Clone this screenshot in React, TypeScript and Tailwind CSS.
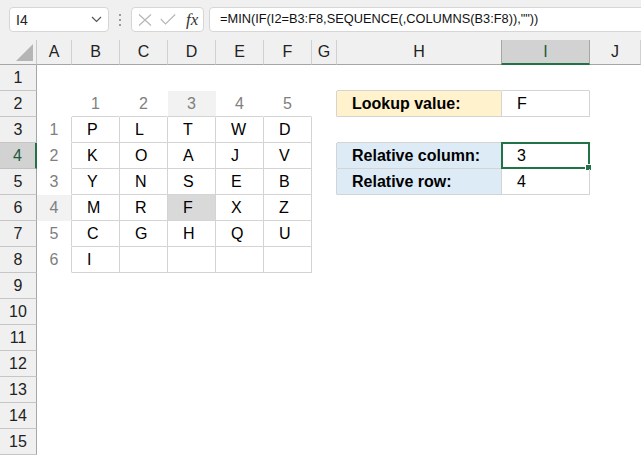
import React from "react";

const COLS = ["A", "B", "C", "D", "E", "F", "G", "H", "I", "J"];

const letters: Record<number, string[]> = {
  3: ["P", "L", "T", "W", "D"],
  4: ["K", "O", "A", "J", "V"],
  5: ["Y", "N", "S", "E", "B"],
  6: ["M", "R", "F", "X", "Z"],
  7: ["C", "G", "H", "Q", "U"],
  8: ["I", "", "", "", ""],
};

function rightColored(r: number, c: number) {
  if (r >= 3 && r <= 8 && c >= 0 && c <= 5) return true;
  if (r === 2 && c >= 6 && c <= 8) return true;
  if (r >= 4 && r <= 5 && c >= 6 && c <= 8) return true;
  return false;
}
function bottomColored(r: number, c: number) {
  if (r >= 2 && r <= 8 && c >= 1 && c <= 5) return true;
  if (r >= 1 && r <= 2 && (c === 7 || c === 8)) return true;
  if (r >= 3 && r <= 5 && (c === 7 || c === 8)) return true;
  return false;
}

function Cell({ r, c }: { r: number; c: number }) {
  const rc = rightColored(r, c);
  const bc = bottomColored(r, c);
  let bg = "";
  if ((r === 2 && c === 3) || (r === 6 && c === 0)) bg = "bg-[#f2f2f2]";
  if (r === 6 && c === 3) bg = "bg-[#d9d9d9]";
  if (r === 2 && c === 7) bg = "bg-[#fff2cc]";
  if ((r === 4 || r === 5) && c === 7) bg = "bg-[#ddebf7]";

  let content: React.ReactNode = null;
  let align = "justify-start";
  if (r === 2 && c >= 1 && c <= 5) {
    content = <span className="text-[#808080]">{c}</span>;
    align = "justify-center";
  } else if (r >= 3 && r <= 8 && c === 0) {
    content = <span className="text-[#808080]">{r - 2}</span>;
    align = "justify-center";
  } else if (r >= 3 && r <= 8 && c >= 1 && c <= 5) {
    content = <span className="pl-[15px]">{letters[r][c - 1]}</span>;
  } else if (c === 7 && r === 2) {
    content = <span className="pl-[15px] font-bold">Lookup value:</span>;
  } else if (c === 7 && r === 4) {
    content = <span className="pl-[15px] font-bold">Relative column:</span>;
  } else if (c === 7 && r === 5) {
    content = <span className="pl-[15px] font-bold">Relative row:</span>;
  } else if (c === 8 && r === 2) {
    content = <span className="pl-[15px]">F</span>;
  } else if (c === 8 && r === 4) {
    content = <span className="pl-[15px]">3</span>;
  } else if (c === 8 && r === 5) {
    content = <span className="pl-[15px]">4</span>;
  }

  return (
    <div
      className={`relative flex items-center ${align} border-r border-b ${
        rc ? "border-r-[#d4d4d4]" : "border-r-transparent"
      } ${bc ? "border-b-[#d4d4d4]" : "border-b-transparent"} ${bg} text-black`}
    >
      {content}
      {r === 4 && c === 8 && (
        <div className="absolute -top-[1px] -left-[1px] -right-[1px] -bottom-[1px] border-2 border-[#217346]">
          <div className="absolute -right-[4px] -bottom-[4px] w-[7px] h-[7px] bg-[#217346] border border-white" />
        </div>
      )}
    </div>
  );
}

export default function App() {
  const rows = Array.from({ length: 15 }, (_, i) => i + 1);
  return (
    <div className="w-[641px] h-[456px] overflow-hidden bg-white font-['Liberation_Sans',Arial,sans-serif] text-[16px] leading-none">
      {/* Formula bar */}
      <div className="h-[40px] bg-[#f0f0f0] flex items-start pt-[7px] pl-[9px]">
        <div className="w-[100px] h-[25px] shrink-0 bg-white border border-[#d6d6d6] rounded-[4px] flex items-center pl-[6px] pr-[4px]">
          <span className="text-[14px] text-[#222] flex-1">I4</span>
          <svg width="11" height="7" viewBox="0 0 11 7" className="mr-[2px]">
            <path d="M1 1 L5.5 5.5 L10 1" fill="none" stroke="#555" strokeWidth="1.2" />
          </svg>
        </div>
        <div className="w-[22px] h-[25px] shrink-0 flex flex-col items-center justify-center gap-[3px]">
          <div className="w-[2px] h-[2px] bg-[#9a9a9a]" />
          <div className="w-[2px] h-[2px] bg-[#9a9a9a]" />
          <div className="w-[2px] h-[2px] bg-[#9a9a9a]" />
        </div>
        <div className="w-[73px] h-[25px] shrink-0 bg-white border border-[#d6d6d6] rounded-[4px] flex items-center pl-[6px]">
          <svg width="14" height="12" viewBox="0 0 14 12">
            <path d="M1 0.5 L13 11.5 M13 0.5 L1 11.5" fill="none" stroke="#b5b5b5" strokeWidth="1.1" />
          </svg>
          <svg width="16" height="11" viewBox="0 0 16 11" className="ml-[8px]">
            <path d="M0.8 5 L5.5 10 L15.2 0.5" fill="none" stroke="#b5b5b5" strokeWidth="1.1" />
          </svg>
          <span className="ml-[10px] font-['Liberation_Serif',serif] italic text-[17px] text-[#333]">fx</span>
        </div>
        <div className="ml-[5px] w-[460px] h-[25px] shrink-0 bg-white border border-[#d6d6d6] rounded-[4px] flex items-center pl-[10px]">
          <span className="text-[12.8px] text-[#111] whitespace-nowrap">
            =MIN(IF(I2=B3:F8,SEQUENCE(,COLUMNS(B3:F8)),""))
          </span>
        </div>
      </div>

      {/* Sheet */}
      <div className="grid grid-cols-[37px_35px_48px_48px_48px_48px_48px_25px_165px_88px_1fr] grid-rows-[25px_repeat(15,26px)]">
        {/* corner */}
        <div className="bg-[#f0f0f0] border-r border-b border-r-[#c8c8c8] border-b-[#a6a6a6] flex items-end justify-end pr-[3px] pb-[3px]">
          <svg width="17" height="17" viewBox="0 0 17 17">
            <path d="M17 0 L17 17 L0 17 Z" fill="#b5b5b5" />
          </svg>
        </div>
        {COLS.map((col, i) =>
          col === "I" ? (
            <div
              key={col}
              className="bg-[#d2d2d2] border-r border-l border-b-2 border-r-[#a6a6a6] border-l-[#a6a6a6] border-b-[#217346] -ml-[1px] flex items-center justify-center text-[#1d5c38]"
            >
              {col}
            </div>
          ) : (
            <div
              key={col}
              className={`bg-[#f0f0f0] border-r border-b ${
                i === 7 ? "border-r-transparent" : "border-r-[#d0d0d0]"
              } border-b-[#a6a6a6] flex items-center justify-center text-[#222]`}
            >
              {col}
            </div>
          )
        )}
        {rows.map((r) => (
          <React.Fragment key={r}>
            {r === 4 ? (
              <div className="bg-[#d2d2d2] border-r-2 border-b border-r-[#217346] border-b-[#c0c0c0] flex items-center justify-center text-[#1d5c38]">
                {r}
              </div>
            ) : (
              <div className="bg-[#f0f0f0] border-r border-b border-r-[#a6a6a6] border-b-[#c6c6c6] flex items-center justify-center text-[#222]">
                {r}
              </div>
            )}
            {COLS.map((_, c) => (
              <Cell key={c} r={r} c={c} />
            ))}
          </React.Fragment>
        ))}
      </div>
    </div>
  );
}
